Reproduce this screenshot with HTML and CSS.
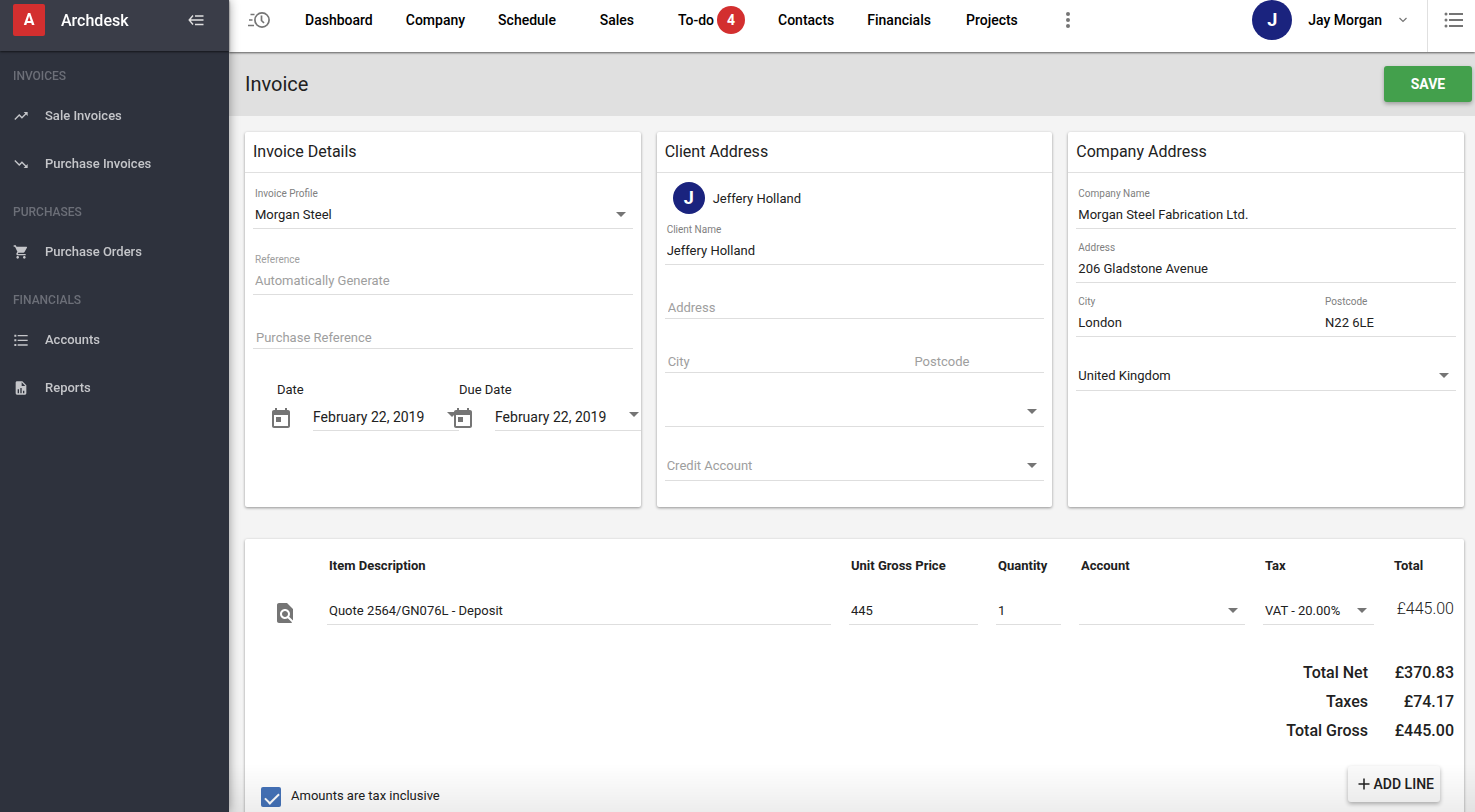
FILE: index.html
```html
<!DOCTYPE html>
<html lang="en">
<head>
  <meta charset="UTF-8">
  <meta name="viewport" content="width=device-width, initial-scale=1.0">
  <title>Invoice - Archdesk</title>
  <link rel="stylesheet" href="styles.css">
</head>
<body>
  <aside class="sidebar">
    <div class="brand">
      <span class="brand-logo">A</span>
      <span class="brand-name">Archdesk</span>
      <button class="icon-btn brand-toggle" aria-label="Collapse menu">
        <svg width="16" height="12" viewBox="0 0 16 12" fill="none" stroke="currentColor" stroke-width="1.400"><path d="M7 2h8.500M2 6h13.500M7 10.500h8.500M5 1.500L1.200 6 5 10.500"/></svg>
      </button>
    </div>
    <nav>
      <h3 class="side-heading">INVOICES</h3>
      <a class="side-link" href="#">
        <svg class="side-icon" viewBox="0 0 24 24"><path d="M16 6l2.290 2.290-4.880 4.880-4-4L2 16.590 3.410 18l6-6 4 4 6.300-6.290L22 12V6z"/></svg>
        Sale Invoices
      </a>
      <a class="side-link" href="#">
        <svg class="side-icon" viewBox="0 0 24 24"><path d="M16 18l2.290-2.290-4.880-4.880-4 4L2 7.410 3.410 6l6 6 4-4 6.300 6.290L22 12v6z"/></svg>
        Purchase Invoices
      </a>
      <h3 class="side-heading">PURCHASES</h3>
      <a class="side-link" href="#">
        <svg class="side-icon" viewBox="0 0 24 24"><path d="M7 18c-1.100 0-1.990.9-1.990 2S5.900 22 7 22s2-.9 2-2-.9-2-2-2zM1 2v2h2l3.600 7.590-1.350 2.450c-.16.28-.25.61-.25.96 0 1.100.9 2 2 2h12v-2H7.420c-.14 0-.25-.11-.25-.25l.03-.12.9-1.630h7.450c.75 0 1.410-.41 1.750-1.030l3.580-6.490A1 1 0 0 0 20 4H5.210l-.94-2H1zm16 16c-1.100 0-1.990.9-1.990 2s.89 2 1.990 2 2-.9 2-2-.9-2-2-2z"/></svg>
        Purchase Orders
      </a>
      <h3 class="side-heading">FINANCIALS</h3>
      <a class="side-link" href="#">
        <svg class="side-icon" viewBox="0 0 24 24"><path d="M2 4h3v3H2zM2 11h3v3H2zM2 18h3v3H2zM7 4.500h15v2H7zM7 11.500h15v2H7zM7 18.500h15v2H7z"/></svg>
        Accounts
      </a>
      <a class="side-link" href="#">
        <svg class="side-icon" viewBox="0 0 24 24"><path d="M13 9h5.500L13 3.500V9M6 2h8l6 6v12a2 2 0 0 1-2 2H6a2 2 0 0 1-2-2V4c0-1.110.89-2 2-2m1 18h2v-6H7v6m4 0h2v-8h-2v8m4 0h2v-4h-2v4z"/></svg>
        Reports
      </a>
    </nav>
  </aside>

  <div class="main">
    <header class="topbar">
      <button class="icon-btn recent-btn" aria-label="Recent">
        <svg width="24" height="18" viewBox="0 0 24 18" fill="none" stroke="currentColor" stroke-width="1.700"><circle cx="15" cy="9" r="7.100"/><path d="M14.500 4.500V9.500l2.500 2.500M3.500 3.500h4M2 9h3.500M1 14.500h6"/></svg>
      </button>
      <nav class="top-nav">
        <a href="#">Dashboard</a>
        <a href="#">Company</a>
        <a href="#">Schedule</a>
        <a href="#">Sales</a>
        <a href="#">To-do <span class="badge">4</span></a>
        <a href="#">Contacts</a>
        <a href="#">Financials</a>
        <a href="#">Projects</a>
      </nav>
      <button class="icon-btn more-btn" aria-label="More">
        <svg width="4" height="16" viewBox="0 0 4 16" fill="currentColor"><circle cx="2" cy="2" r="2"/><circle cx="2" cy="8" r="2"/><circle cx="2" cy="14" r="2"/></svg>
      </button>
      <button class="user">
        <span class="avatar avatar-lg">J</span>
        <span>Jay Morgan</span>
        <svg width="10" height="6" viewBox="0 0 10 6" fill="none" stroke="#757575" stroke-width="1.200"><path d="M1.500 1L5 4.500 8.500 1"/></svg>
      </button>
      <div class="top-list">
        <button class="icon-btn" aria-label="Open list">
          <svg width="20" height="16" viewBox="0 0 20 16" fill="currentColor"><circle cx="2" cy="2" r="1.500"/><circle cx="2" cy="8" r="1.500"/><circle cx="2" cy="14" r="1.500"/><path d="M5 1h14v2H5zM5 7h14v2H5zM5 13h14v2H5z"/></svg>
        </button>
      </div>
    </header>

    <div class="page-head">
      <h1>Invoice</h1>
      <button class="btn btn-save">SAVE</button>
    </div>

    <main class="content">
      <div class="cards">
        <section class="card">
          <h2>Invoice Details</h2>
          <div class="card-body">
            <div class="field field-gap">
              <label for="profile">Invoice Profile</label>
              <span class="select"><select id="profile"><option>Morgan Steel</option></select></span>
            </div>
            <div class="field field-off">
              <label for="reference">Reference</label>
              <input type="text" id="reference" value="Automatically Generate" disabled>
            </div>
            <div class="field field-empty">
              <input type="text" placeholder="Purchase Reference" aria-label="Purchase Reference">
            </div>
            <div class="dates">
              <div class="date">
                <label for="date">Date</label>
                <div class="date-row">
                  <svg width="24" height="24" viewBox="0 0 24 24" fill="#757575"><path d="M19 3h-1V1h-2v2H8V1H6v2H5c-1.110 0-1.990.9-1.990 2L3 19c0 1.100.89 2 2 2h14c1.100 0 2-.9 2-2V5c0-1.100-.9-2-2-2zm0 16H5V8h14v11zM7 10h5v5H7z"/></svg>
                  <span class="date-input"><input type="text" id="date" value="February 22, 2019"></span>
                </div>
              </div>
              <div class="date">
                <label for="due-date">Due Date</label>
                <div class="date-row">
                  <svg width="24" height="24" viewBox="0 0 24 24" fill="#757575"><path d="M19 3h-1V1h-2v2H8V1H6v2H5c-1.110 0-1.990.9-1.990 2L3 19c0 1.100.89 2 2 2h14c1.100 0 2-.9 2-2V5c0-1.100-.9-2-2-2zm0 16H5V8h14v11zM7 10h5v5H7z"/></svg>
                  <span class="date-input"><input type="text" id="due-date" value="February 22, 2019"></span>
                </div>
              </div>
            </div>
          </div>
        </section>

        <section class="card">
          <h2>Client Address</h2>
          <div class="card-body">
            <div class="client">
              <span class="avatar">J</span>
              <span>Jeffery Holland</span>
            </div>
            <div class="field">
              <label for="client-name">Client Name</label>
              <input type="text" id="client-name" value="Jeffery Holland">
            </div>
            <div class="field field-empty">
              <input type="text" placeholder="Address" aria-label="Address">
            </div>
            <div class="field-row">
              <div class="field field-empty">
                <input type="text" placeholder="City" aria-label="City">
              </div>
              <div class="field field-empty">
                <input type="text" placeholder="Postcode" aria-label="Postcode">
              </div>
            </div>
            <div class="field field-select">
              <span class="select"><select aria-label="Country"><option></option></select></span>
            </div>
            <div class="field field-select field-off">
              <span class="select"><select aria-label="Credit Account"><option>Credit Account</option></select></span>
            </div>
          </div>
        </section>

        <section class="card">
          <h2>Company Address</h2>
          <div class="card-body">
            <div class="field">
              <label for="company-name">Company Name</label>
              <input type="text" id="company-name" value="Morgan Steel Fabrication Ltd.">
            </div>
            <div class="field">
              <label for="company-address">Address</label>
              <input type="text" id="company-address" value="206 Gladstone Avenue">
            </div>
            <div class="field-row">
              <div class="field">
                <label for="company-city">City</label>
                <input type="text" id="company-city" value="London">
              </div>
              <div class="field">
                <label for="company-postcode">Postcode</label>
                <input type="text" id="company-postcode" value="N22 6LE">
              </div>
            </div>
            <div class="field field-select">
              <span class="select"><select aria-label="Country"><option>United Kingdom</option></select></span>
            </div>
          </div>
        </section>
      </div>

      <section class="card items-card">
        <table class="items">
          <thead>
            <tr>
              <th class="col-icon"></th>
              <th>Item Description</th>
              <th class="col-price">Unit Gross Price</th>
              <th class="col-qty">Quantity</th>
              <th class="col-account">Account</th>
              <th class="col-tax">Tax</th>
              <th class="col-total">Total</th>
            </tr>
          </thead>
          <tbody>
            <tr>
              <td class="col-icon">
                <svg width="24" height="24" viewBox="0 0 24 24" fill="#757575"><path d="M20 19.590V8l-6-6H6c-1.100 0-1.990.9-1.990 2L4 20c0 1.100.89 2 1.990 2H18c.45 0 .85-.15 1.190-.4l-4.430-4.430c-.8.52-1.740.83-2.760.83-2.760 0-5-2.240-5-5s2.240-5 5-5 5 2.240 5 5c0 1.020-.31 1.960-.83 2.750L20 19.590zM9 13c0 1.660 1.340 3 3 3s3-1.340 3-3-1.340-3-3-3-3 1.340-3 3z"/></svg>
              </td>
              <td><div class="cell"><input type="text" value="Quote 2564/GN076L - Deposit" aria-label="Item Description"></div></td>
              <td><div class="cell"><input type="text" value="445" aria-label="Unit Gross Price"></div></td>
              <td><div class="cell"><input type="text" value="1" aria-label="Quantity"></div></td>
              <td><div class="cell"><span class="select"><select aria-label="Account"><option></option></select></span></div></td>
              <td><div class="cell"><span class="select"><select aria-label="Tax"><option>VAT - 20.00%</option></select></span></div></td>
              <td class="line-total">£445.00</td>
            </tr>
          </tbody>
        </table>

        <dl class="totals">
          <dt>Total Net</dt><dd>£370.83</dd>
          <dt>Taxes</dt><dd>£74.17</dd>
          <dt>Total Gross</dt><dd>£445.00</dd>
        </dl>

        <div class="items-foot">
          <div class="tax-check">
            <input type="checkbox" id="inclusive" checked>
            <label for="inclusive">Amounts are tax inclusive</label>
          </div>
          <button class="btn btn-add">
            <svg width="12" height="12" viewBox="0 0 12 12" stroke="currentColor" stroke-width="1.500"><path d="M6 .5v11M.5 6h11"/></svg>
            ADD LINE
          </button>
        </div>
      </section>
    </main>
    <div class="bottom-fade"></div>
  </div>
</body>
</html>
```

FILE: styles.css
```css
* {
  box-sizing: border-box;
}
body {
  margin: 0;
  height: 100vh;
  display: flex;
  overflow: hidden;
  font-family: Roboto, "Liberation Sans", sans-serif;
  font-size: 13px;
  color: #212121;
  background: #f4f4f4;
}
h1, h2, h3, dl, dd {
  margin: 0;
}
a {
  color: inherit;
  text-decoration: none;
}
button, input, select {
  font: inherit;
  color: inherit;
  border: none;
  background: none;
  padding: 0;
  margin: 0;
}
button {
  cursor: pointer;
}
svg {
  display: block;
  flex: none;
}

/* sidebar */
.sidebar {
  width: 229px;
  flex: none;
  background: #2e323d;
  color: #c5c6ca;
  box-shadow: 0 0 10px rgba(0, 0, 0, 0.4);
  position: relative;
  z-index: 2;
}
.brand {
  display: flex;
  align-items: center;
  height: 51px;
  padding: 0 25px 11px 13px;
  background: #3a3d48;
  box-shadow: 0 1px 2px rgba(0, 0, 0, 0.6);
  color: #fff;
}
.brand-logo {
  width: 32px;
  height: 32px;
  line-height: 32px;
  border-radius: 2px;
  background: #d32f2f;
  font-size: 16px;
  font-weight: bold;
  text-align: center;
}
.brand-name {
  margin-left: 16px;
  font-size: 16px;
  font-weight: 500;
}
.icon-btn {
  display: flex;
  align-items: center;
  justify-content: center;
  color: #757575;
}
.brand-toggle {
  margin-left: auto;
  color: #e0e0e0;
}
.side-heading {
  padding: 17px 13px 7px;
  font-size: 12px;
  line-height: 16px;
  font-weight: 500;
  color: #6c6f78;
}
.side-link {
  display: flex;
  align-items: center;
  gap: 16px;
  height: 48px;
  padding: 0 13px;
  font-weight: 500;
}
.side-icon {
  width: 16px;
  height: 16px;
  margin-top: 2px;
  fill: currentColor;
}

/* top bar */
.main {
  flex: 1;
  min-width: 0;
  display: flex;
  flex-direction: column;
}
.topbar {
  display: flex;
  align-items: flex-start;
  height: 52px;
  flex: none;
  background: #fff;
  color: #000;
  font-size: 14px;
  font-weight: 500;
  box-shadow: 0 1px 2px rgba(0, 0, 0, 0.6);
  position: relative;
  z-index: 1;
}
.topbar .icon-btn {
  height: 40px;
}
.recent-btn {
  width: 60px;
}
.top-nav {
  display: flex;
  gap: 1px;
}
.top-nav a {
  display: flex;
  align-items: center;
  justify-content: center;
  gap: 3px;
  height: 40px;
  min-width: 88px;
  padding: 0 16px;
}
.badge {
  width: 28px;
  height: 28px;
  line-height: 28px;
  border-radius: 50%;
  background: #d32f2f;
  color: #fff;
  font-weight: bold;
  text-align: center;
}
.more-btn {
  width: 64px;
}
.user {
  display: flex;
  align-items: center;
  gap: 16px;
  margin-left: auto;
  padding-right: 19px;
}
.avatar {
  width: 32px;
  height: 32px;
  line-height: 32px;
  border-radius: 50%;
  background: #1a237e;
  color: #fff;
  font-size: 18px;
  font-weight: bold;
  text-align: center;
}
.avatar-lg {
  width: 40px;
  height: 40px;
  line-height: 40px;
}
.top-list {
  width: 48px;
  height: 52px;
  padding-left: 16px;
  border-left: 1px solid #e0e0e0;
}

/* page title */
.page-head {
  display: flex;
  align-items: center;
  justify-content: space-between;
  height: 64px;
  flex: none;
  padding: 0 3px 0 16px;
  background: #e0e0e0;
}
.page-head h1 {
  font-size: 20px;
  font-weight: 400;
}
.btn {
  height: 36px;
  border-radius: 3px;
  font-size: 14px;
  box-shadow: 0 2px 4px rgba(0, 0, 0, 0.3);
}
.btn-save {
  min-width: 88px;
  background: #43a04c;
  color: #fff;
  font-weight: bold;
}

/* cards */
.content {
  flex: 1;
  min-height: 0;
  overflow-y: auto;
  scrollbar-width: none;
  padding: 16px 11px 16px 16px;
}
.cards {
  display: grid;
  grid-template-columns: repeat(3, minmax(0, 1fr));
  gap: 16px;
}
.card {
  background: #fff;
  border-radius: 2px;
  box-shadow: 0 1px 3px rgba(0, 0, 0, 0.4);
  overflow: hidden;
}
.card h2 {
  padding: 0 8px;
  border-bottom: 1px solid #e0e0e0;
  font-size: 16px;
  line-height: 40px;
  font-weight: 400;
}
.card-body {
  padding: 2px 8px 26px;
}
.field {
  height: 54px;
  padding: 13px 0 3px;
  border-bottom: 1px solid #dedede;
}
.field label {
  display: block;
  padding: 0 2px;
  margin-bottom: 5px;
  font-size: 10px;
  line-height: 12px;
  color: #808080;
}
.field input, .cell input, .select select {
  display: block;
  width: 100%;
  height: 20px;
  padding: 0 2px;
  line-height: 20px;
  appearance: none;
  outline: none;
}
.field-gap {
  margin-bottom: 12px;
}
.field-off label, .field-off input, .field-off select {
  color: #9e9e9e;
}
.field-empty {
  padding-top: 33px;
}
.field-empty input {
  padding: 0 3px;
}
.field-select {
  padding-top: 29px;
}
::placeholder {
  color: #9e9e9e;
  opacity: 1;
}
.field-row {
  display: grid;
  grid-template-columns: 65fr 35fr;
}
.select {
  display: block;
  position: relative;
}
.select::after, .date-input::after {
  content: "";
  position: absolute;
  top: 7px;
  right: 7px;
  border: 5px solid transparent;
  border-top-color: #757575;
  border-bottom: none;
  pointer-events: none;
}

/* dates run wider than the card and get clipped by it */
.dates {
  display: flex;
  padding: 33px 0 0 16px;
}
.date {
  width: 182px;
  flex: none;
}
.date label {
  display: block;
  padding-left: 8px;
  line-height: 16px;
}
.date-row {
  display: flex;
  align-items: center;
  gap: 20px;
  padding-top: 8px;
  position: relative;
}
.date-input {
  position: relative;
  flex: none;
  width: 146px;
  border-bottom: 1px solid #dedede;
}
.date-input input {
  display: block;
  width: 100%;
  height: 24px;
  padding-bottom: 2px;
  font-size: 14px;
  outline: none;
}
.date-input::after {
  top: 6px;
  right: 2px;
}
.client {
  display: flex;
  align-items: center;
  gap: 8px;
  padding: 7px 8px 0;
  margin-bottom: -3px;
}

/* item table */
.items-card {
  margin-top: 32px;
  padding-bottom: 40px;
}
.items {
  width: 100%;
  table-layout: fixed;
  border-collapse: collapse;
}
.items th {
  padding: 18px 11px 16px;
  line-height: 18px;
  font-weight: bold;
  text-align: left;
}
.items td {
  padding: 10px 9px 17px;
  vertical-align: top;
}
.items .col-icon {
  width: 73px;
  padding-left: 28px;
}
.col-price {
  width: 147px;
}
.col-qty {
  width: 83px;
}
.col-account {
  width: 184px;
}
.col-tax {
  width: 129px;
}
.col-total {
  width: 81px;
}
.cell {
  padding-bottom: 3px;
  border-bottom: 1px solid #dedede;
}
.items .line-total {
  padding: 8px 10px 0 0;
  font-size: 16px;
  line-height: 20px;
  font-weight: 300;
  text-align: right;
}
.totals {
  display: grid;
  grid-template-columns: 1fr 86px;
  padding: 16px 10px 0 0;
  font-size: 16px;
  line-height: 29px;
  font-weight: 500;
  text-align: right;
}
.items-foot {
  display: flex;
  align-items: flex-start;
  justify-content: space-between;
  padding: 21px 24px 0 16px;
}
.tax-check {
  display: flex;
  gap: 10px;
  margin-top: 21px;
  line-height: 18px;
}
.tax-check input {
  appearance: none;
  width: 20px;
  height: 20px;
  border-radius: 2px;
  position: relative;
}
.tax-check input:checked {
  background: #4573b9;
}
.tax-check input:checked::after {
  content: "";
  position: absolute;
  left: 7px;
  top: 3px;
  width: 6px;
  height: 12px;
  border: solid #fff;
  border-width: 0 2px 2px 0;
  transform: rotate(45deg);
}
.btn-add {
  display: flex;
  align-items: center;
  gap: 4px;
  padding: 0 6px 0 10px;
  background: #fafafa;
  font-weight: 500;
}
.bottom-fade {
  position: fixed;
  left: 229px;
  right: 0;
  bottom: 0;
  height: 48px;
  background: linear-gradient(transparent, rgba(0, 0, 0, 0.07));
  pointer-events: none;
}
```
